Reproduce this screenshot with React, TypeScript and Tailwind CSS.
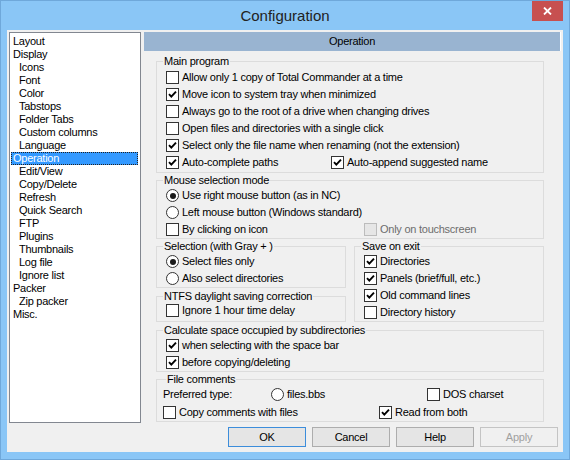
import React from "react";

const treeItems: [string, number][] = [
  ["Layout", 0], ["Display", 0], ["Icons", 1], ["Font", 1], ["Color", 1], ["Tabstops", 1],
  ["Folder Tabs", 1], ["Custom columns", 1], ["Language", 1], ["Operation", 0], ["Edit/View", 1],
  ["Copy/Delete", 1], ["Refresh", 1], ["Quick Search", 1], ["FTP", 1], ["Plugins", 1],
  ["Thumbnails", 1], ["Log file", 1], ["Ignore list", 1], ["Packer", 0], ["Zip packer", 1], ["Misc.", 0],
];

function Box({ checked, disabled }: { checked?: boolean; disabled?: boolean }) {
  return (
    <span
      className={
        "w-[13px] h-[13px] shrink-0 border flex items-center justify-center " +
        (disabled ? "border-[#bcbcbc] bg-[#e6e6e6]" : "border-[#333333] bg-white")
      }
    >
      {checked && (
        <svg width="11" height="11" viewBox="0 0 11 11">
          <path d="M2 5.2 L4.3 7.6 L9 2.6" fill="none" stroke="#000" strokeWidth="1.9" />
        </svg>
      )}
    </span>
  );
}

function Check({ label, checked, disabled, w }: { label: string; checked?: boolean; disabled?: boolean; w?: string }) {
  return (
    <div className={"flex items-center gap-[3px] h-full " + (w ?? "")}>
      <Box checked={checked} disabled={disabled} />
      <span className={"whitespace-nowrap " + (disabled ? "text-[#6d6d6d]" : "")}>{label}</span>
    </div>
  );
}

function Radio({ label, checked, w }: { label: string; checked?: boolean; w?: string }) {
  return (
    <div className={"flex items-center gap-[3px] h-full " + (w ?? "")}>
      <span className="w-[13px] h-[13px] shrink-0 rounded-full border border-[#333333] bg-white flex items-center justify-center">
        {checked && <span className="w-[6px] h-[6px] rounded-full bg-[#1a1a1a]" />}
      </span>
      <span className="whitespace-nowrap">{label}</span>
    </div>
  );
}

function Row({ children, h = "h-[17px]" }: { children: React.ReactNode; h?: string }) {
  return <div className={"flex items-center " + h}>{children}</div>;
}

function Group({ title, children, cls, legendCls }: { title: string; children: React.ReactNode; cls?: string; legendCls?: string }) {
  return (
    <fieldset className={"border border-[#dcdcdc] min-w-0 " + (cls ?? "pl-[9px] pt-[1px]")}>
      <legend className={"px-[1px] leading-[12px] " + (legendCls ?? "ml-[-3px]")}>{title}</legend>
      {children}
    </fieldset>
  );
}

function Btn({ label, variant }: { label: string; variant?: "default" | "disabled" }) {
  const c =
    variant === "default"
      ? "border-[#3c8ddb] bg-[#e5e5e5]"
      : variant === "disabled"
      ? "border-[#c4c4c4] bg-[#f0f0f0] text-[#a0a0a0]"
      : "border-[#adadad] bg-[#e5e5e5]";
  return <div className={"w-[78px] h-[20px] border flex items-center justify-center " + c}>{label}</div>;
}

export default function App() {
  return (
    <div className="w-[570px] h-[460px] bg-[#8ac6f6] border border-[#6fa8da] flex flex-col font-['Liberation_Sans',Arial,sans-serif] text-[11px] tracking-[-0.25px] text-black">
      <div className="h-[29px] grid grid-cols-[1fr_auto_1fr]">
        <div />
        <div className="self-center mt-[1px] text-[15px] tracking-normal text-[#222]">Configuration</div>
        <div className="justify-self-end mr-[6px]">
          <div className="w-[31px] h-[20px] bg-[#c75050] flex items-center justify-center">
            <svg width="9" height="8" viewBox="0 0 9 8">
              <path d="M1 0.5 L8 7.5 M8 0.5 L1 7.5" stroke="#fff" strokeWidth="1.8" />
            </svg>
          </div>
        </div>
      </div>

      <div className="mx-[6px] h-[422px] bg-[#f0f0f0] px-[2px] pt-[2px] flex flex-col">
        <div className="flex gap-[3px] h-[391px]">
          <div className="w-[132px] h-full border border-[#828790] bg-white pt-[2px] flex flex-col">
            {treeItems.map(([name, lvl]) =>
              name === "Operation" ? (
                <div
                  key={name}
                  className="h-[13px] leading-[11px] ml-[1px] mr-[2px] pl-[1px] bg-[#3399ff] text-white border border-dotted border-[#222]"
                >
                  {name}
                </div>
              ) : (
                <div key={name} className={"h-[13px] leading-[13px] " + (lvl ? "pl-[9px]" : "pl-[3px]")}>
                  {name}
                </div>
              )
            )}
          </div>

          <div className="flex-1 flex flex-col">
            <div className="h-[19px] bg-[#99b4d1] border-r border-white flex items-center justify-center">Operation</div>
            <div className="pl-[12px] pr-[17px] pt-[4px] flex flex-col">
              <Group title="Main program" cls="pl-[9px] pt-[2px] pb-[1px]">
                <Row><Check label="Allow only 1 copy of Total Commander at a time" /></Row>
                <Row><Check label="Move icon to system tray when minimized" checked /></Row>
                <Row><Check label="Always go to the root of a drive when changing drives" /></Row>
                <Row><Check label="Open files and directories with a single click" /></Row>
                <Row><Check label="Select only the file name when renaming (not the extension)" checked /></Row>
                <Row>
                  <Check label="Auto-complete paths" checked w="w-[165px]" />
                  <Check label="Auto-append suggested name" checked />
                </Row>
              </Group>

              <div className="mt-[1px]">
                <Group title="Mouse selection mode">
                  <Row><Radio label="Use right mouse button (as in NC)" checked /></Row>
                  <Row><Radio label="Left mouse button (Windows standard)" /></Row>
                  <Row>
                    <Check label="By clicking on icon" w="w-[198px]" />
                    <Check label="Only on touchscreen" disabled />
                  </Row>
                </Group>
              </div>

              <div className="mt-[1px] flex gap-[8px]">
                <div className="w-[190px] flex flex-col gap-[2px]">
                  <Group title="Selection (with Gray + )">
                    <Row><Radio label="Select files only" checked /></Row>
                    <Row><Radio label="Also select directories" /></Row>
                  </Group>
                  <Group title="NTFS daylight saving correction" cls="pl-[9px] pb-[2px]">
                    <Row><Check label="Ignore 1 hour time delay" /></Row>
                  </Group>
                </div>
                <div className="w-[190px]">
                  <Group title="Save on exit">
                    <Row><Check label="Directories" checked /></Row>
                    <Row><Check label="Panels (brief/full, etc.)" checked /></Row>
                    <Row><Check label="Old command lines" checked /></Row>
                    <Row><Check label="Directory history" /></Row>
                  </Group>
                </div>
              </div>

              <div className="mt-[2px]">
                <Group title="Calculate space occupied by subdirectories">
                  <Row><Check label="when selecting with the space bar" checked /></Row>
                  <Row><Check label="before copying/deleting" checked /></Row>
                </Group>
              </div>

              <div className="mt-[1px]">
                <Group title="File comments" cls="pl-[6px]" legendCls="ml-[3px]">
                  <Row h="h-[18px]">
                    <span className="w-[108px] whitespace-nowrap">Preferred type:</span>
                    <Radio label="files.bbs" w="w-[156px]" />
                    <Check label="DOS charset" />
                  </Row>
                  <Row h="h-[18px]">
                    <Check label="Copy comments with files" w="w-[216px]" />
                    <Check label="Read from both" checked />
                  </Row>
                </Group>
              </div>
            </div>
          </div>
        </div>

        <div className="mt-[4px] pr-[3px] flex justify-end gap-[6px]">
          <Btn label="OK" variant="default" />
          <Btn label="Cancel" />
          <Btn label="Help" />
          <Btn label="Apply" variant="disabled" />
        </div>
      </div>
    </div>
  );
}
